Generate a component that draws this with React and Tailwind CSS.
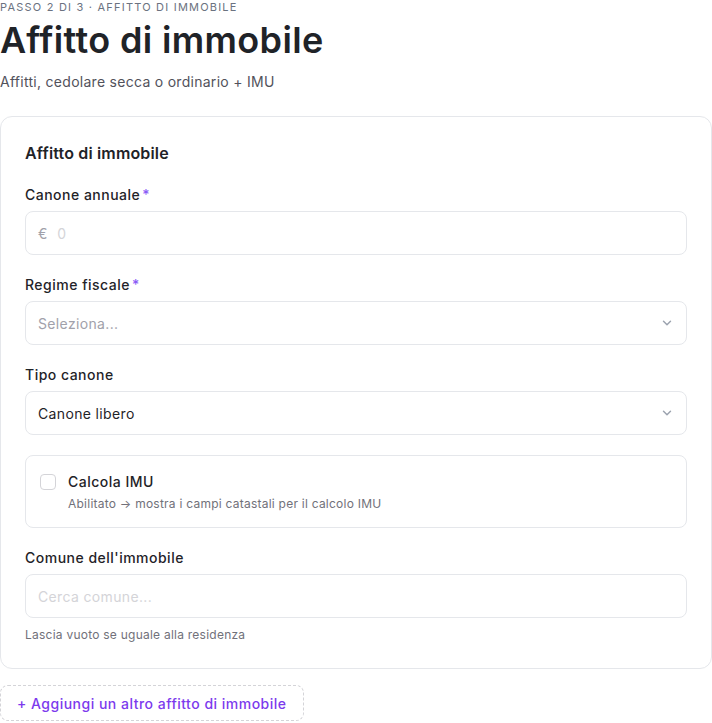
import React from "react";

const font = { fontFamily: "Inter, 'Noto Sans', sans-serif" };

function Label({ children, required }) {
  return (
    <div className="text-[14px] leading-5 font-medium tracking-[0.035em] text-[#1f2328] mb-1.5">
      {children}
      {required && <span className="text-[#8b5cf6] ml-0.5">*</span>}
    </div>
  );
}

function Chevron() {
  return (
    <svg width="14" height="14" viewBox="0 0 24 24" fill="none" stroke="#9ca3af" strokeWidth="2.5" strokeLinecap="round" strokeLinejoin="round">
      <path d="M6 9l6 6 6-6" />
    </svg>
  );
}

function SelectBox({ value, placeholder }) {
  return (
    <div className="h-11 rounded-lg border border-[#e5e7eb] bg-white flex items-center justify-between pl-3 pr-3">
      <span className={value ? "text-[14px] tracking-[0.025em] text-[#1f2328]" : "text-[14px] tracking-[0.025em] text-[#a1a1aa]"}>{value || placeholder}</span>
      <Chevron />
    </div>
  );
}

export default function App() {
  return (
    <div className="w-[712px] bg-white" style={font}>
      <div className="text-[11px] leading-[14px] tracking-[0.11em] text-[#6b7280] uppercase">Passo 2 di 3 · Affitto di immobile</div>
      <h1 className="text-[36px] leading-[40px] font-semibold tracking-[0.01em] text-[#1f2328] mt-1.5">Affitto di immobile</h1>
      <p className="text-[14px] leading-5 tracking-[0.02em] text-[#52525b] mt-3">Affitti, cedolare secca o ordinario + IMU</p>

      <div className="mt-6 w-[712px] rounded-xl border border-[#e5e7eb] bg-white px-6 pt-6 pb-[25px]">
        <h2 className="text-[16px] leading-6 font-semibold tracking-[0.01em] text-[#1f2328] mb-5">Affitto di immobile</h2>

        <div className="flex flex-col gap-5">
          <div>
            <Label required>Canone annuale</Label>
            <div className="h-11 rounded-lg border border-[#e5e7eb] bg-white flex items-center pl-3 gap-2.5 text-[14px]">
              <span className="text-[#a1a1aa]">€</span>
              <span className="text-[#d4d4d8]">0</span>
            </div>
          </div>

          <div>
            <Label required>Regime fiscale</Label>
            <SelectBox placeholder="Seleziona..." />
          </div>

          <div>
            <Label>Tipo canone</Label>
            <SelectBox value="Canone libero" />
          </div>

          <div className="rounded-lg border border-[#e5e7eb] pl-3.5 pr-4 pt-4 pb-[15px] flex gap-3">
            <div className="w-4 h-4 mt-0.5 rounded border border-[#d4d4d8] bg-white shrink-0" />
            <div>
              <div className="text-[14px] leading-5 font-medium tracking-[0.035em] text-[#1f2328]">Calcola IMU</div>
              <div className="text-[12px] leading-4 tracking-[0.02em] text-[#71717a] mt-1">Abilitato → mostra i campi catastali per il calcolo IMU</div>
            </div>
          </div>

          <div>
            <Label>Comune dell'immobile</Label>
            <div className="h-11 rounded-lg border border-[#e5e7eb] bg-white flex items-center pl-3 text-[14px] tracking-[0.025em] text-[#d4d4d8]">Cerca comune...</div>
            <div className="text-[12px] leading-4 tracking-[0.02em] text-[#71717a] mt-[9px]">Lascia vuoto se uguale alla residenza</div>
          </div>
        </div>
      </div>

      <div className="mt-4 inline-flex items-center h-9 px-4 rounded-lg border border-dashed border-[#d4d4d8] text-[14px] font-medium tracking-[0.035em] text-[#7c3aed]">
        + Aggiungi un altro affitto di immobile
      </div>
    </div>
  );
}
